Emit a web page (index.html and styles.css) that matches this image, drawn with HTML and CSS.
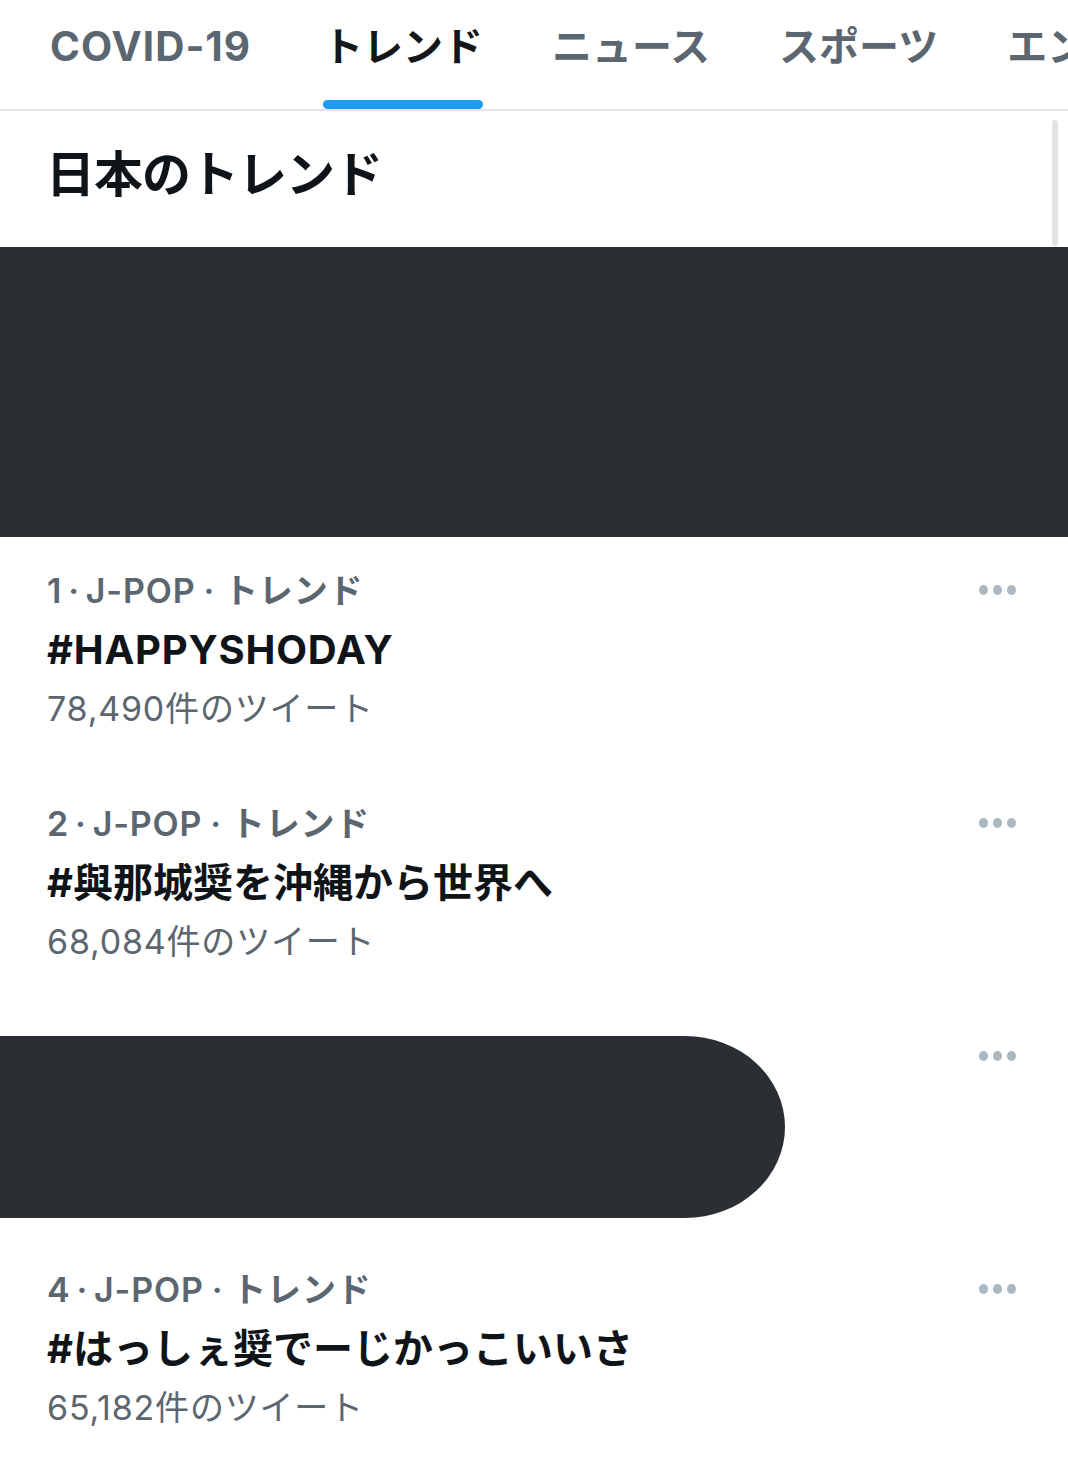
FILE: index.html
```html
<!DOCTYPE html>
<html lang="ja">
<head>
<meta charset="utf-8">
<title>トレンド</title>
<link rel="stylesheet" href="styles.css">
</head>
<body>
<nav class="tabs">
  <div class="tab tab-latin">COVID-19</div>
  <div class="tab active">トレンド</div>
  <div class="tab">ニュース</div>
  <div class="tab">スポーツ</div>
  <div class="tab">エンタメ</div>
</nav>
<main class="content">
  <div class="scrollbar"></div>
  <h1 class="heading">日本のトレンド</h1>
  <div class="redact-block"></div>
  <ul class="trends">
    <li class="trend">
      <div class="meta">1<span class="sep">·</span>J-POP<span class="sep sep-last">·</span>トレンド</div>
      <div class="title title-latin">#HAPPYSHODAY</div>
      <div class="count">78,490件のツイート</div>
      <span class="more"><i></i><i></i><i></i></span>
    </li>
    <li class="trend">
      <div class="meta">2<span class="sep">·</span>J-POP<span class="sep sep-last">·</span>トレンド</div>
      <div class="title">#與那城奨を沖縄から世界へ</div>
      <div class="count">68,084件のツイート</div>
      <span class="more"><i></i><i></i><i></i></span>
    </li>
    <li class="trend redacted">
      <div class="redact-pill"></div>
      <span class="more"><i></i><i></i><i></i></span>
    </li>
    <li class="trend">
      <div class="meta">4<span class="sep">·</span>J-POP<span class="sep sep-last">·</span>トレンド</div>
      <div class="title">#はっしぇ奨でーじかっこいいさ</div>
      <div class="count">65,182件のツイート</div>
      <span class="more"><i></i><i></i><i></i></span>
    </li>
  </ul>
</main>
</body>
</html>
```

FILE: styles.css
```css
* { box-sizing: border-box; }
html, body {
  margin: 0;
  padding: 0;
  background: #ffffff;
  overflow: hidden;
}
body {
  width: 1068px;
  height: 1463px;
  font-family: Inter, "Noto Sans CJK JP", sans-serif;
  color: #14171a;
}
.tabs {
  display: flex;
  height: 111px;
  padding-left: 50px;
  border-bottom: 2px solid #e1e6ea;
  white-space: nowrap;
  overflow: hidden;
}
.tab {
  position: relative;
  font-size: 40px;
  font-weight: 700;
  color: #5b6670;
  line-height: 94px;
  margin-right: 69px;
  flex-shrink: 0;
}
.tab-latin {
  font-size: 40.5px;
  letter-spacing: 1px;
  margin-right: 72px;
}
.tab.active {
  color: #14171a;
}
.tab.active::after {
  content: "";
  position: absolute;
  left: 0;
  right: 0;
  bottom: 0;
  height: 9px;
  border-radius: 5px;
  background: #1d9bf0;
}
.content {
  position: relative;
}
.scrollbar {
  position: absolute;
  right: 10px;
  top: 9px;
  width: 6px;
  height: 126px;
  border-radius: 3px;
  background: #e3e3e3;
}
.heading {
  margin: 0;
  height: 136px;
  padding: 29px 0 0 46px;
  font-family: "Noto Sans CJK JP", sans-serif;
  font-size: 49px;
  font-weight: 700;
  line-height: 62px;
  letter-spacing: -1px;
  color: #0f1419;
}
.redact-block {
  height: 290px;
  background: #2b2f33;
}
.trends {
  list-style: none;
  margin: 0;
  padding: 0;
}
.trend {
  position: relative;
  height: 233px;
  padding: 24px 0 0 47px;
}
.meta, .title, .count {
  line-height: 59px;
  white-space: nowrap;
}
.meta {
  font-size: 34px;
  font-weight: 600;
  color: #5b6670;
  letter-spacing: 0.8px;
}
.sep {
  margin: 0 6px 0 6px;
}
.sep-last {
  margin: 0 9px 0 8px;
}
.title {
  font-size: 40px;
  font-weight: 700;
  color: #0f1419;
}
.title-latin {
  letter-spacing: 0.8px;
}
.count {
  font-size: 34px;
  font-weight: 400;
  color: #5b6670;
  letter-spacing: 0.8px;
}
.more {
  position: absolute;
  top: 48px;
  right: 52px;
  display: flex;
  gap: 5px;
}
.more i {
  display: block;
  width: 9px;
  height: 10px;
  border-radius: 50%;
  background: #aab8c2;
}
.trend.redacted {
  padding: 33px 0 0 0;
}
.redact-pill {
  width: 785px;
  height: 182px;
  background: #2b2f33;
  border-radius: 0 100px 100px 0 / 0 91px 91px 0;
}
```
